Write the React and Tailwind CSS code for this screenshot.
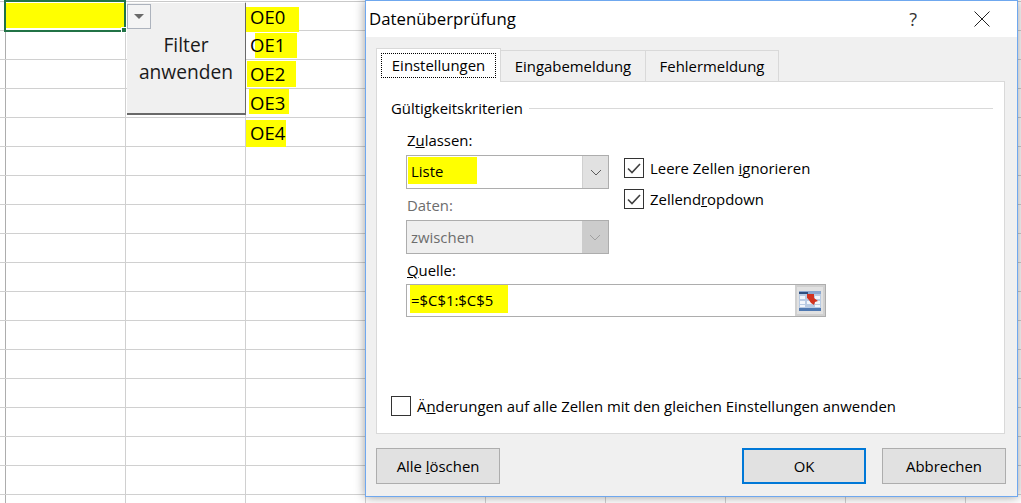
import React from 'react';

const FONT = "font-['Open_Sans','Noto_Sans',sans-serif]";

const marks = {
  0: { text: 'OE0', left: 'left-0', w: 'w-[53px]', top: 'top-[5px]', h: 'h-[25px]', y: 'top-[3px]' },
  1: { text: 'OE1', left: 'left-[9px]', w: 'w-[42px]', top: 'top-[2px]', h: 'h-[25px]', y: 'top-[2px]' },
  2: { text: 'OE2', left: 'left-px', w: 'w-[49px]', top: 'top-px', h: 'h-[26px]', y: 'top-[2px]' },
  3: { text: 'OE3', left: 'left-[3px]', w: 'w-[40px]', top: 'top-0', h: 'h-[25px]', y: 'top-[2px]' },
  4: { text: 'OE4', left: 'left-0', w: 'w-[40px]', top: 'top-[2px]', h: 'h-[27px]', y: 'top-[3px]' },
};

const Chevron = ({ color = '#5a5a5a' }) => (
  <svg width="12" height="7" viewBox="0 0 12 7" fill="none">
    <path d="M1 1l5 5 5-5" stroke={color} strokeWidth="1" />
  </svg>
);

const Check = () => (
  <svg width="14" height="11" viewBox="0 0 14 11" fill="none">
    <path d="M1 5.5l4 4L13 1" stroke="#404040" strokeWidth="1.6" />
  </svg>
);

const Checkbox = ({ checked }) => (
  <div className="w-5 h-5 border border-[#333] bg-white flex items-center justify-center shrink-0">
    {checked && <Check />}
  </div>
);

const RefIcon = () => (
  <svg width="22" height="20" viewBox="0 0 22 20">
    <rect x="0" y="0" width="22" height="20" fill="#b9cbe3" />
    <rect x="0" y="0" width="22" height="3" fill="#8aa7cf" />
    <rect x="0" y="1" width="9" height="2" fill="#2f4f80" />
    <rect x="1" y="5" width="5" height="3" fill="#f2f6fb" />
    <rect x="8" y="5" width="6" height="3" fill="#f2f6fb" />
    <rect x="16" y="5" width="5" height="3" fill="#f2f6fb" />
    <rect x="1" y="10" width="5" height="3" fill="#f2f6fb" />
    <rect x="8" y="10" width="6" height="3" fill="#f2f6fb" />
    <rect x="16" y="10" width="5" height="3" fill="#f2f6fb" />
    <rect x="1" y="14" width="5" height="2" fill="#f2f6fb" />
    <rect x="16" y="14" width="5" height="2" fill="#f2f6fb" />
    <rect x="0" y="17" width="22" height="3" fill="#4f79b2" />
    <path d="M8 3h7v4l4 3-3 1-1 3-3-2-2-3-2-2z" fill="#d2331f" />
  </svg>
);

const DialogButton = ({ children, primary }) => (
  <button
    className={`w-[124px] h-9 bg-[#e1e1e1] text-[14.9px] text-black ${primary ? 'border-2 border-[#0078d7]' : 'border border-[#adadad]'}`}
  >
    {children}
  </button>
);

const Tab = ({ children, w, active }) => (
  <div
    className={`h-[31px] flex items-center justify-center ${w} border-t border-r border-[#d9d9d9] ${active ? 'relative -mt-0.5 h-[34px] bg-white border-l -mb-px z-10' : ''}`}
  >
    {active ? (
      <span className="w-[115px] h-[25px] border border-dotted border-black flex items-center justify-center">{children}</span>
    ) : (
      children
    )}
  </div>
);

function Sheet() {
  return (
    <div className="relative w-full h-full overflow-hidden bg-white">
      <div className="h-[2px] border-b border-[#c9c9c9]" />
      {Array.from({ length: 18 }).map((_, row) => (
        <div key={row} className="flex h-[29px] border-b border-[#d0d0d0]">
          <div className="w-[6px] border-r border-[#adadad] shrink-0" />
          {Array.from({ length: 8 }).map((_, col) => {
            const mark = col === 2 ? marks[row] : null;
            return (
              <div key={col} className="relative w-[120px] shrink-0 border-r border-[#d0d0d0]">
                {mark && (
                  <>
                    <div className={`absolute ${mark.left} ${mark.top} ${mark.w} ${mark.h} bg-[#ffff00]`} />
                    <span className={`absolute left-[4px] ${mark.y} text-[18.5px] leading-[24px] text-black`}>{mark.text}</span>
                  </>
                )}
              </div>
            );
          })}
        </div>
      ))}

      {/* selected cell */}
      <div className="absolute left-[4px] top-0 w-[122px] h-[32px] border-2 border-[#217346]">
        <div className="w-full h-[25px] bg-[#ffff00] mt-px" />
        <div className="absolute -right-[3px] -bottom-[3px] w-[6px] h-[6px] bg-[#217346] border border-white" />
      </div>

      {/* form button */}
      <div className="absolute left-[127px] top-[3px] w-[119px] h-[112px] bg-[#f0f0f0] border-r border-b-2 border-[#696969] flex items-center justify-center pb-px text-center text-[19.2px] leading-[27px] text-[#1a1a1a]">
        Filter
        <br />
        anwenden
      </div>
      <div className="absolute left-[127px] top-[4px] w-[24px] h-[25px] bg-[#f4f4f4] border border-[#adb3bd] flex items-center justify-center">
        <div className="w-0 h-0 border-l-[5px] border-r-[5px] border-t-[5px] border-l-transparent border-r-transparent border-t-[#6a6a6a]" />
      </div>
    </div>
  );
}

function Dialog() {
  return (
    <div className="absolute left-[365px] top-0 w-[653px] h-[497px] bg-[#f0f0f0] border border-[#6fa8ef] shadow-[0_0_10px_rgba(0,0,0,0.4)] text-[14.9px] text-black">
      {/* title bar */}
      <div className="h-9 bg-white flex items-center pl-[3px] pr-[27px]">
        <span className="text-[16.8px] flex-1">Datenüberprüfung</span>
        <span className="text-[18px] text-[#333] mr-[57px]">?</span>
        <svg width="16" height="16" viewBox="0 0 16 16" fill="none">
          <path d="M0.5 0.5l15 15M15.5 0.5l-15 15" stroke="#222" strokeWidth="1" />
        </svg>
      </div>

      <div className="pl-[10px] pt-[13px]">
        {/* tabs */}
        <div className="flex items-end h-[31px]">
          <Tab w="w-[125px]" active>Einstellungen</Tab>
          <Tab w="w-[145px]">Eingabemeldung</Tab>
          <Tab w="w-[133px]">Fehlermeldung</Tab>
        </div>

        {/* panel */}
        <div className="w-[629px] h-[353px] bg-white border border-[#d9d9d9] pl-[14px] pr-[11px] pt-[16px]">
          <div className="flex items-center gap-[6px] h-5">
            <span>Gültigkeitskriterien</span>
            <div className="flex-1 h-px bg-[#d9d9d9]" />
          </div>

          <div className="flex mt-[12px]">
            <div className="w-[233px] pl-[15px]">
              <div className="h-5 leading-5 pl-px"><span>Z<u>u</u>lassen:</span></div>
              <div className="mt-[5px] w-[203px] h-[34px] border border-[#adadad] flex">
                <div className="flex-1 relative flex items-center pl-[4px] pb-0.5">
                  <div className="absolute left-px top-px w-[69px] h-[27px] bg-[#ffff00]" />
                  <span className="relative">Liste</span>
                </div>
                <div className="w-[26px] bg-[#e1e1e1] border-l border-[#d0d0d0] flex items-center justify-center">
                  <Chevron />
                </div>
              </div>
              <div className="h-5 leading-5 mt-[6px] pl-px text-[#6d6d6d]">Daten:</div>
              <div className="mt-[5px] w-[203px] h-[34px] border border-[#adadad] flex bg-[#efefef] text-[#6d6d6d]">
                <div className="flex-1 flex items-center pl-[4px]">zwischen</div>
                <div className="w-[26px] bg-[#cccccc] flex items-center justify-center">
                  <Chevron color="#a0a0a0" />
                </div>
              </div>
            </div>

            <div className="pt-[28px]">
              <div className="flex items-center gap-[6px] h-5">
                <Checkbox checked />
                <span>Leere Zellen <u>i</u>gnorieren</span>
              </div>
              <div className="flex items-center gap-[6px] h-5 mt-[11px]">
                <Checkbox checked />
                <span>Zellend<u>r</u>opdown</span>
              </div>
            </div>
          </div>

          <div className="pl-[15px]">
            <div className="h-5 leading-5 mt-[6px] pl-px"><span><u>Q</u>uelle:</span></div>
            <div className="mt-[4px] w-[420px] h-[33px] border border-[#adadad] flex">
              <div className="flex-1 relative flex items-center pl-[4px]">
                <div className="absolute left-[3px] top-0 w-[98px] h-[28px] bg-[#ffff00]" />
                <span className="relative">=$C$1:$C$5</span>
              </div>
              <div className="w-[30px] bg-[#e1e1e1] border-2 border-[#d0d0d0] flex items-center justify-center">
                <RefIcon />
              </div>
            </div>
          </div>

          <div className="flex items-center gap-[6px] h-5 mt-[79px]">
            <Checkbox />
            <span>Ä<u>n</u>derungen auf alle Zellen mit den gleichen Einstellungen anwenden</span>
          </div>
        </div>

        {/* buttons */}
        <div className="flex mt-[14px] w-[630px]">
          <DialogButton>Alle <u>l</u>öschen</DialogButton>
          <div className="flex-1" />
          <DialogButton primary>OK</DialogButton>
          <div className="w-4" />
          <DialogButton>Abbrechen</DialogButton>
        </div>
      </div>
    </div>
  );
}

export default function App() {
  return (
    <div className={`relative w-[1021px] h-[503px] overflow-hidden ${FONT}`}>
      <Sheet />
      <Dialog />
    </div>
  );
}
